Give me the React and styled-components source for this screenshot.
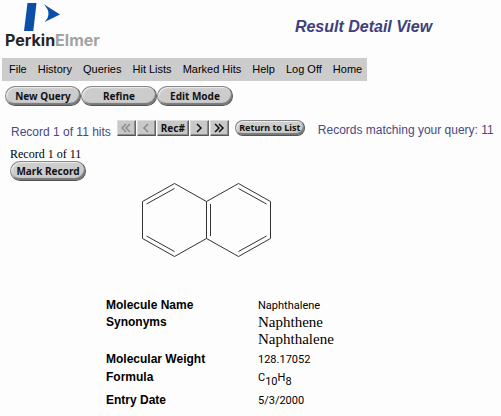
import React from "react";
import styled, { createGlobalStyle, css } from "styled-components";

const GlobalStyle = createGlobalStyle`
  * { box-sizing: border-box; }
  body {
    margin: 0;
    background: #fdfdfd;
    color: #000;
    font-family: "Liberation Sans", Arial, sans-serif;
    font-size: 12px;
  }
`;

const Page = styled.div`
  padding: 2px 4px 8px 2px;
`;

const Header = styled.header`
  display: grid;
  grid-template-columns: 228px 1fr;
  height: 56px;
`;

const Brand = styled.div`
  padding-left: 3px;
`;

const Mark = styled.svg`
  display: block;
  margin-left: 18px;
`;

const BrandName = styled.div`
  font: bold 16px/16px Inter, sans-serif;
  color: #242428;
`;

const BrandTail = styled.span`
  color: #a3a3a3;
`;

const Title = styled.h1`
  margin: 0;
  padding-top: 15px;
  justify-self: center;
  font-size: 16px;
  line-height: 19px;
  font-style: italic;
  color: #40407c;
`;

const Menu = styled.nav`
  display: flex;
  width: fit-content;
  gap: 11px;
  padding: 0 5px 0 7px;
  background: #ccc;
`;

const MenuLink = styled.a`
  color: #000;
  text-decoration: none;
  white-space: nowrap;
  font-size: 11px;
  line-height: 23px;
`;

const Actions = styled.div`
  display: flex;
  padding: 5px 0 0 3px;
`;

const buttonText = css`
  padding: 0;
  color: #111;
  font: bold 10px/12px "Noto Sans", sans-serif;
  white-space: nowrap;
`;

const Pill = styled.button`
  ${buttonText}
  font-size: ${(p) => (p.$small ? "9px" : "10px")};
  width: ${(p) => (p.$small ? "70px" : "76px")};
  height: ${(p) => (p.$small ? "16px" : "20px")};
  border: 1px solid #888;
  border-right-color: #555;
  border-bottom-color: #555;
  border-radius: 10px;
  background: #ccc;
  box-shadow: inset 1px 1px 1px #eee, inset -1px -2px 1px #777;
`;

const StepButton = styled.button`
  ${buttonText}
  display: flex;
  align-items: center;
  justify-content: center;
  width: ${(p) => (p.$wide ? "32px" : "19px")};
  height: 16px;
  border: 1px solid;
  border-color: #ddd #666 #555 #ddd;
  background: #c8c8c8;
  box-shadow: inset -1px -1px 0 #8c8c8c;
  color: ${(p) => (p.disabled ? "#8c8c8c" : "#111")};
`;

const RecordBar = styled.div`
  display: flex;
  align-items: flex-start;
  padding: 14px 0 0 9px;
`;

const Caption = styled.span`
  padding-top: ${(p) => (p.$low ? "5px" : "3px")};
  font-size: 12px;
  line-height: 14px;
  color: #484884;
  white-space: nowrap;
`;

const Steps = styled.div`
  display: flex;
  gap: 1px;
  margin: 0 6px;
`;

const Query = styled.div`
  display: flex;
  gap: 13px;
`;

const RecordBlock = styled.section`
  padding: 8px 0 0 8px;
`;

const RecordCount = styled.div`
  font: 12px/14px "Liberation Serif", serif;
`;

const Structure = styled.svg`
  display: block;
  margin: 0 0 0 138px;
`;

const Details = styled.table`
  margin: 38px 0 0 104px;
  border-collapse: collapse;
`;

const Row = styled.tr`
  height: ${(p) => p.$height}px;
  vertical-align: top;
`;

const Label = styled.th`
  width: 152px;
  padding: 1px 0 0;
  text-align: left;
  line-height: 15px;
`;

const Value = styled.td`
  padding: 1px 0 0;
  font: 11px/15px Roboto, sans-serif;
`;

const Synonyms = styled.td`
  padding: 0;
  font: 15px/17px "Liberation Serif", serif;
`;

const Sub = styled.sub`
  font-size: 11px;
  line-height: 0;
  vertical-align: -4px;
`;

const menu = ["File", "History", "Queries", "Hit Lists", "Marked Hits", "Help", "Log Off", "Home"];

function Chevrons({ back, double: twice }) {
  const one = back ? "M6 1 L2 5 L6 9" : "M2 1 L6 5 L2 9";
  const two = back ? "M10 1 L6 5 L10 9" : "M6 1 L10 5 L6 9";
  return (
    <svg width={twice ? 12 : 8} height="10" fill="none" stroke="currentColor" strokeWidth="1.5" aria-hidden="true">
      <path d={one} />
      {twice && <path d={two} />}
    </svg>
  );
}

function Naphthalene() {
  return (
    <Structure width="132" height="78" fill="none" stroke="#333" strokeWidth="1" role="img" aria-label="Naphthalene structure">
      <path d="M66.5 20.5 L34.5 2.5 L2.5 20.5 V57.5 L34.5 75.5 L66.5 57.5 Z" />
      <path d="M66.5 20.5 L98.5 2.5 L130.5 20.5 V57.5 L98.5 75.5 L66.5 57.5" />
      <path d="M34.5 7.5 L6.5 23 M6.5 55 L34.5 70.5 M70.5 23 V55 M98.5 7.5 L126.5 23 M126.5 55 L98.5 70.5" />
    </Structure>
  );
}

export default function App() {
  return (
    <>
      <GlobalStyle />
      <Page>
        <Header>
          <Brand>
            <Mark width="40" height="30" fill="#0b4fa8" aria-hidden="true">
              <path d="M4.5 1 H13.5 L10.3 29 H1 Z" />
              <path d="M20.5 2 L37 12.5 L21.5 20 Q30 11.5 20.5 2 Z" />
            </Mark>
            <BrandName>Perkin<BrandTail>Elmer</BrandTail></BrandName>
          </Brand>
          <Title>Result Detail View</Title>
        </Header>
        <Menu>
          {menu.map((name) => (
            <MenuLink key={name} href="#">{name}</MenuLink>
          ))}
        </Menu>
        <Actions>
          <Pill>New Query</Pill>
          <Pill>Refine</Pill>
          <Pill>Edit Mode</Pill>
        </Actions>
        <RecordBar>
          <Caption $low>Record 1 of 11 hits</Caption>
          <Steps>
            <StepButton disabled aria-label="First record"><Chevrons back double /></StepButton>
            <StepButton disabled aria-label="Previous record"><Chevrons back /></StepButton>
            <StepButton $wide>Rec#</StepButton>
            <StepButton aria-label="Next record"><Chevrons /></StepButton>
            <StepButton aria-label="Last record"><Chevrons double /></StepButton>
          </Steps>
          <Query>
            <Pill $small>Return to List</Pill>
            <Caption>Records matching your query: 11</Caption>
          </Query>
        </RecordBar>
        <RecordBlock>
          <RecordCount>Record 1 of 11</RecordCount>
          <Pill>Mark Record</Pill>
        </RecordBlock>
        <Naphthalene />
        <Details>
          <tbody>
            <Row $height={17}><Label scope="row">Molecule Name</Label><Value>Naphthalene</Value></Row>
            <Row $height={37}><Label scope="row">Synonyms</Label><Synonyms>Naphthene<br />Naphthalene</Synonyms></Row>
            <Row $height={18}><Label scope="row">Molecular Weight</Label><Value>128.17052</Value></Row>
            <Row $height={23}><Label scope="row">Formula</Label><Value>C<Sub>10</Sub>H<Sub>8</Sub></Value></Row>
            <Row $height={17}><Label scope="row">Entry Date</Label><Value>5/3/2000</Value></Row>
          </tbody>
        </Details>
      </Page>
    </>
  );
}
